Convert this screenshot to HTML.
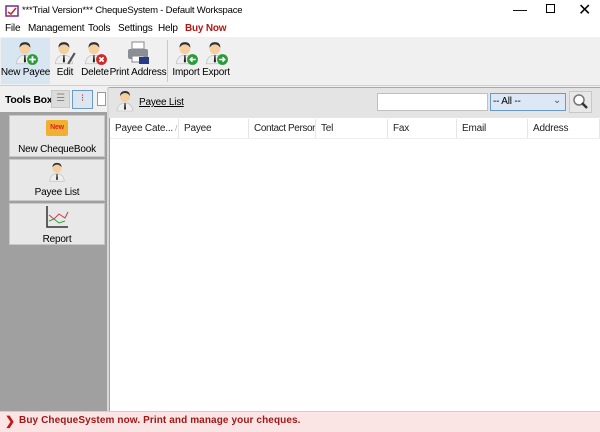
<!DOCTYPE html>
<html><head><style>
*{margin:0;padding:0;box-sizing:border-box}
body{width:600px;height:432px;overflow:hidden;font-family:"Liberation Sans",sans-serif;font-size:10px;letter-spacing:-0.2px;color:#000;background:#f0f0f0;position:relative;white-space:nowrap}
.abs{position:absolute}
.tb{position:absolute;top:38px;height:46px;text-align:center;font-size:10px}
.tb span{position:absolute;bottom:6px;left:-4px;right:-4px;white-space:nowrap}
.tb svg{position:absolute;top:2px;left:50%;margin-left:-13px}
.th{position:absolute;top:119px;height:19px;line-height:19px;padding-left:5px;border-right:1px solid #e5e5e5;font-size:10px;color:#222;overflow:hidden}
.tool{position:absolute;left:9px;width:96px;background:#e8e8e8;border:1px solid #c8c8c8;text-align:center;font-size:10px}
</style></head><body>
<svg width="0" height="0" style="position:absolute"><defs>
<g id="p"><circle cx="10" cy="8" r="5" fill="#f5cfa0"/><path d="M5 7 Q5 2 10 2 Q15 2 15 7 Q13 4 10 4 Q7 4 5 7Z" fill="#333"/><path d="M2 22 Q3 14 10 14 Q17 14 18 22Z" fill="#eee" stroke="#bbb" stroke-width=".6"/><path d="M9.5 14 L10.5 14 L11 20 L10 21 L9 20Z" fill="#222"/></g>
</defs></svg>
<div class="abs" style="left:0;top:0;width:600px;height:22px;background:#fff"></div>
<svg class="abs" style="left:5px;top:4px" width="14" height="14"><rect x="1" y="2" width="12" height="10" fill="#fff" stroke="#7a2a8a" stroke-width="1.5"/><path d="M3 8 L6 10 L11 4" stroke="#c03030" stroke-width="1.6" fill="none"/></svg>
<div class="abs" style="left:22px;top:5px;font-size:9.5px;letter-spacing:-0.2px">***Trial Version*** ChequeSystem - Default Workspace</div>
<div class="abs" style="left:513px;top:1px;font-size:14px">—</div>
<div class="abs" style="left:546px;top:4px;width:9px;height:9px;border:1px solid #000"></div>
<div class="abs" style="left:578px;top:0;font-size:16px">✕</div>
<div class="abs" style="left:0;top:21px;width:600px;height:16px;background:#fff"></div>
<div class="abs" style="left:5px;top:23px">File</div>
<div class="abs" style="left:28px;top:23px">Management</div>
<div class="abs" style="left:88px;top:23px">Tools</div>
<div class="abs" style="left:118px;top:23px">Settings</div>
<div class="abs" style="left:158px;top:23px">Help</div>
<div class="abs" style="left:185px;top:23px;font-weight:bold;color:#b01818">Buy Now</div>
<div class="abs" style="left:0;top:37px;width:600px;height:49px;background:#f0f0f0;border-bottom:1px solid #d0d0d0"></div>
<div class="abs" style="left:1px;top:38px;width:49px;height:46px;background:#d8e6f2"></div>
<div class="tb" style="left:1px;width:49px"><svg width="26" height="26" viewBox="0 0 22 24"><use href="#p"/><circle cx="17" cy="18" r="5" fill="#2a9a3a"/><path d="M17 15v6M14 18h6" stroke="#fff" stroke-width="1.6"/></svg><span>New Payee</span></div>
<div class="tb" style="left:52px;width:26px"><svg width="26" height="26" viewBox="0 0 22 24"><use href="#p"/><path d="M14 22 L20 12" stroke="#555" stroke-width="2"/></svg><span>Edit</span></div>
<div class="tb" style="left:80px;width:30px"><svg width="26" height="26" viewBox="0 0 22 24"><use href="#p"/><circle cx="17" cy="18" r="5" fill="#d02828"/><path d="M15 16l4 4M19 16l-4 4" stroke="#fff" stroke-width="1.6"/></svg><span>Delete</span></div>
<div class="tb" style="left:111px;width:54px"><svg width="26" height="26"><rect x="7" y="2" width="12" height="7" fill="#fff" stroke="#888"/><rect x="3" y="9" width="20" height="10" rx="2" fill="#8a8f96"/><rect x="7" y="16" width="12" height="6" fill="#fff" stroke="#888"/><rect x="14" y="17" width="10" height="7" fill="#2a3a8a"/></svg><span>Print Address</span></div>
<div class="abs" style="left:167px;top:40px;width:1px;height:42px;background:#c8c8c8"></div>
<div class="tb" style="left:171px;width:30px"><svg width="26" height="26" viewBox="0 0 22 24"><use href="#p"/><circle cx="17" cy="18" r="5" fill="#2a9a3a"/><path d="M20 18h-5M17 16l-2 2 2 2" stroke="#fff" stroke-width="1.4" fill="none"/></svg><span>Import</span></div>
<div class="tb" style="left:202px;width:28px"><svg width="26" height="26" viewBox="0 0 22 24"><use href="#p"/><circle cx="17" cy="18" r="5" fill="#2a9a3a"/><path d="M14 18h5M17 16l2 2-2 2" stroke="#fff" stroke-width="1.4" fill="none"/></svg><span>Export</span></div>
<div class="abs" style="left:0;top:87px;width:107px;height:324px;background:#a0a0a0"></div>
<div class="abs" style="left:0;top:87px;width:107px;height:25px;background:#f0f0f0"></div>
<div class="abs" style="left:5px;top:94px;font-weight:bold;font-size:10.5px;letter-spacing:-0.3px">Tools Box</div>
<div class="abs" style="left:51px;top:90px;width:19px;height:18px;background:#dcdcdc;border:1px solid #c8c8c8;color:#888;font-size:10px;text-align:center;line-height:16px">☰</div>
<div class="abs" style="left:72px;top:90px;width:21px;height:19px;background:#dbe6f0;border:1px solid #6a9ac8;color:#c03030;text-align:center;font-size:10px;line-height:16px">⁝</div>
<div class="abs" style="left:97px;top:92px;width:9px;height:14px;background:#fff;border:1px solid #999"></div>
<div class="tool" style="top:115px;height:42px"><div style="margin:4px auto 0;width:22px;height:16px;background:#f0b030;border-radius:2px;color:#e02020;font-size:7px;font-weight:bold;line-height:16px">New</div><div style="margin-top:8px">New ChequeBook</div></div>
<div class="tool" style="top:159px;height:42px"><svg width="20" height="22" viewBox="0 0 20 24" style="margin-top:1px"><use href="#p"/></svg><div style="margin-top:1px">Payee List</div></div>
<div class="tool" style="top:203px;height:42px"><svg width="24" height="24" style="margin-top:1px"><path d="M2 1V22H23" stroke="#333" fill="none" stroke-width="1.5"/><path d="M4 10 L9 14 L14 9 L20 13 L23 7" stroke="#c04040" fill="none"/><path d="M4 16 L9 14 L14 18 L20 16" stroke="#30a040" fill="none"/></svg><div style="margin-top:2px">Report</div></div>
<div class="abs" style="left:107px;top:87px;width:2px;height:324px;background:#d8d8d8"></div>
<div class="abs" style="left:109px;top:87px;width:491px;height:31px;background:#e4e4e4;border-top:1px solid #a8a8a8"></div>
<svg class="abs" style="left:115px;top:89px" width="20" height="24" viewBox="0 0 20 24"><use href="#p"/></svg>
<div class="abs" style="left:139px;top:97px;text-decoration:underline">Payee List</div>
<div class="abs" style="left:377px;top:93px;width:111px;height:18px;background:#fff;border:1px solid #c0c0c0"></div>
<div class="abs" style="left:490px;top:93px;width:76px;height:18px;background:#dce8f5;border:1px solid #6a9ac8;font-size:10px;padding:2px 0 0 2px">-- All --<span style="position:absolute;right:4px;top:1px;color:#555">⌄</span></div>
<div class="abs" style="left:569px;top:91px;width:23px;height:22px;background:#e8e8e8;border:1px solid #c8c8c8"><svg width="21" height="20"><circle cx="9" cy="8" r="5" fill="#fff" stroke="#777" stroke-width="1.5"/><path d="M12 11 L17 16" stroke="#333" stroke-width="2.5"/></svg></div>
<div class="abs" style="left:109px;top:118px;width:491px;height:293px;background:#fff;border-left:1px solid #a0a0a0"></div>
<div class="th" style="left:110px;width:69px">Payee Cate...<span style="color:#aaa;font-size:8px"> /</span></div>
<div class="th" style="left:179px;width:70px">Payee</div>
<div class="th" style="left:249px;width:67px;letter-spacing:-0.4px">Contact Person</div>
<div class="th" style="left:316px;width:72px">Tel</div>
<div class="th" style="left:388px;width:69px">Fax</div>
<div class="th" style="left:457px;width:71px">Email</div>
<div class="th" style="left:528px;width:72px">Address</div>
<div class="abs" style="left:110px;top:138px;width:490px;height:1px;background:#eee"></div>
<div class="abs" style="left:0;top:411px;width:600px;height:21px;background:#fbe4e4;border-top:1px solid #e0c8c8"></div>
<div class="abs" style="left:5px;top:414px;color:#c01818;font-weight:bold;font-size:12px">❯</div>
<div class="abs" style="left:19px;top:415px;color:#a01818;font-weight:bold;font-size:10px;letter-spacing:0.1px">Buy ChequeSystem now. Print and manage your cheques.</div>
</body></html>
